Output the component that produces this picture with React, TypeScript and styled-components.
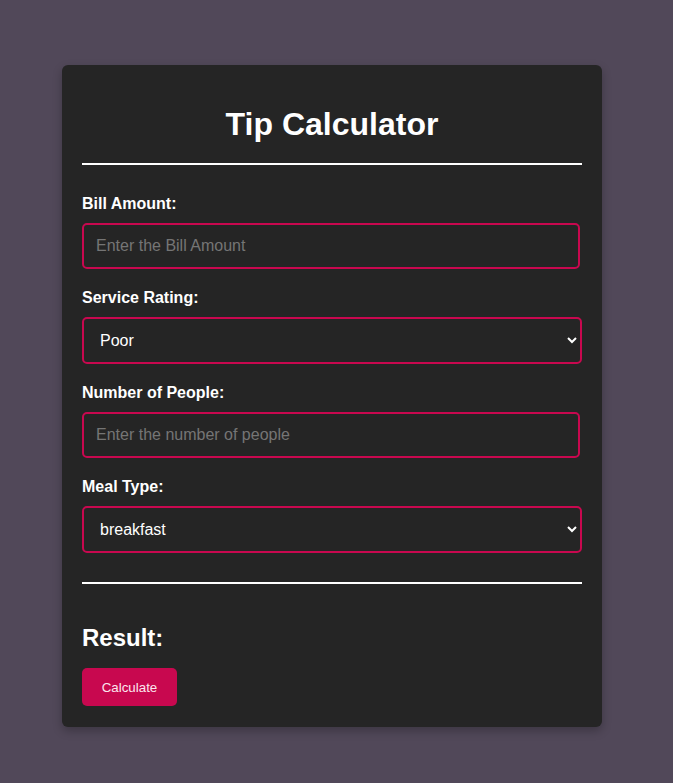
import React from "react";
import styled, { createGlobalStyle } from "styled-components";

const Global = createGlobalStyle`
  html, body { margin: 0; padding: 0; background: #514859; }
  body { font-family: "Liberation Sans", Arial, sans-serif; min-height: 783px; }
  * { box-sizing: border-box; }
`;

const Page = styled.div`
  padding: 65px 0 40px 62px;
`;

const Card = styled.div`
  width: 540px;
  background: #252525;
  border-radius: 6px;
  padding: 20px 20px 21px;
  box-shadow: 0 4px 10px rgba(0, 0, 0, 0.25);
  color: #fff;
`;

const Title = styled.h1`
  margin: 21px 0 20px;
  font-size: 32px;
  line-height: 37px;
  font-weight: bold;
  text-align: center;
`;

const Rule = styled.hr<{ $after: number }>`
  margin: 0 0 ${(p) => p.$after}px;
  border: none;
  height: 2px;
  background: #fff;
`;

const Field = styled.div<{ $last?: boolean }>`
  display: flex;
  flex-direction: column;
  margin-bottom: ${(p) => (p.$last ? 29 : 19)}px;
`;

const Label = styled.label`
  font-size: 16px;
  line-height: 19px;
  font-weight: bold;
  margin-bottom: 10px;
`;

const Input = styled.input`
  width: 498px;
  height: 46px;
  padding: 0 12px;
  background: #252525;
  border: 2px solid #c8084f;
  border-radius: 5px;
  color: #fff;
  font-family: "Liberation Sans", Arial, sans-serif;
  font-size: 16px;
  outline: none;
  &::placeholder { color: #757575; }
`;

const Select = styled.select`
  width: 100%;
  height: 47px;
  padding: 0 12px;
  background: #252525;
  border: 2px solid #c8084f;
  border-radius: 5px;
  color: #fff;
  font-family: "Liberation Sans", Arial, sans-serif;
  font-size: 16px;
  outline: none;
  color-scheme: dark;
`;

const Result = styled.h2`
  margin: 0 0 16px;
  font-size: 24px;
  line-height: 28px;
  font-weight: bold;
`;

const Button = styled.button`
  width: 95px;
  height: 38px;
  padding: 0;
  background: #c8084f;
  border: none;
  border-radius: 5px;
  color: #fbe6ee;
  font-family: "Liberation Sans", Arial, sans-serif;
  font-size: 13.33px;
  cursor: pointer;
`;

export default function App() {
  return (
    <>
      <Global />
      <Page>
        <Card>
          <Title>Tip Calculator</Title>
          <Rule $after={29} />
          <Field>
            <Label>Bill Amount:</Label>
            <Input placeholder="Enter the Bill Amount" />
          </Field>
          <Field>
            <Label>Service Rating:</Label>
            <Select defaultValue="poor">
              <option value="poor">Poor</option>
              <option value="good">Good</option>
              <option value="excellent">Excellent</option>
            </Select>
          </Field>
          <Field>
            <Label>Number of People:</Label>
            <Input placeholder="Enter the number of people" />
          </Field>
          <Field $last>
            <Label>Meal Type:</Label>
            <Select defaultValue="breakfast">
              <option value="breakfast">breakfast</option>
              <option value="lunch">lunch</option>
              <option value="dinner">dinner</option>
            </Select>
          </Field>
          <Rule $after={40} />
          <Result>Result:</Result>
          <Button>Calculate</Button>
        </Card>
      </Page>
    </>
  );
}
